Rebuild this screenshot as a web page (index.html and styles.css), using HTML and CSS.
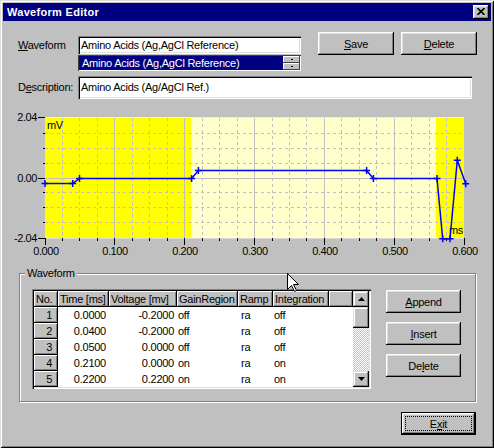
FILE: index.html
```html
<!DOCTYPE html>
<html>
<head>
<meta charset="utf-8">
<link rel="stylesheet" href="styles.css">
</head>
<body>
<div class="window">
  <div class="titlebar">
    <span class="title">Waveform Editor</span>
    <span class="close"><svg width="8" height="7" viewBox="0 0 8 7"><path d="M0.5 0 L7.5 7 M7.5 0 L0.5 7" stroke="#000" stroke-width="1.6"/></svg></span>
  </div>

  <div class="row1">
    <div class="lbl"><u>W</u>aveform</div>
    <div class="stack">
      <div class="field">Amino Acids (Ag,AgCl Reference)</div>
      <div class="listrow">
        <div class="sel">Amino Acids (Ag,AgCl Reference)</div>
        <div class="spin"><span><i></i></span><span><i></i></span></div>
      </div>
    </div>
    <div class="btn save"><span><u>S</u>ave</span></div>
    <div class="btn del-top"><span><u>D</u>elete</span></div>
  </div>

  <div class="row2">
    <div class="lbl lbl-desc">D<u>e</u>scription:</div>
    <div class="field desc">Amino Acids (Ag/AgCl Ref.)</div>
  </div>

  <svg class="chart" width="488" height="160" viewBox="3 102 488 160">
    <rect x="45" y="118" width="146" height="120" fill="#ffff00"/>
    <rect x="191" y="118" width="245" height="120" fill="#ffffcc"/>
    <rect x="436" y="118" width="28" height="120" fill="#ffff00"/>
    <line x1="45" y1="117.5" x2="464" y2="117.5" stroke="#ececec"/>
    <line x1="45" y1="238.5" x2="464" y2="238.5" stroke="#d8d8d8"/>
    <g stroke="#c0c0c0" stroke-dasharray="3 3">
      <path d="M62.5 118V238 M79.5 118V238 M97.5 118V238 M132.5 118V238 M149.5 118V238 M167.5 118V238 M202.5 118V238 M219.5 118V238 M237.5 118V238 M272.5 118V238 M289.5 118V238 M306.5 118V238 M341.5 118V238 M359.5 118V238 M376.5 118V238 M411.5 118V238 M429.5 118V238 M446.5 118V238"/>
      <path d="M45 133.5H464 M45 148.5H464 M45 163.5H464 M45 192.5H464 M45 207.5H464 M45 222.5H464"/>
    </g>
    <g stroke="#c0c0c0">
      <path d="M114.5 118V238 M184.5 118V238 M254.5 118V238 M324.5 118V238 M394.5 118V238 M45 178.5H464"/>
    </g>
    <g stroke="#000">
      <path d="M38 117.5H45 M38 178.5H45 M38 238.5H45 M43 133.5H45 M43 148.5H45 M43 163.5H45 M43 192.5H45 M43 207.5H45 M43 222.5H45"/>
      <path d="M45.5 238V245 M114.5 238V245 M184.5 238V245 M254.5 238V245 M324.5 238V245 M394.5 238V245 M464.5 238V245"/>
      <path d="M62.5 238V241 M79.5 238V241 M97.5 238V241 M132.5 238V241 M149.5 238V241 M167.5 238V241 M202.5 238V241 M219.5 238V241 M237.5 238V241 M272.5 238V241 M289.5 238V241 M306.5 238V241 M341.5 238V241 M359.5 238V241 M376.5 238V241 M411.5 238V241 M429.5 238V241 M446.5 238V241"/>
    </g>
    <g class="axis">
      <text x="37" y="121" text-anchor="end">2.04</text>
      <text x="37" y="182" text-anchor="end">0.00</text>
      <text x="37" y="242" text-anchor="end">-2.04</text>
      <text x="46" y="254.5" text-anchor="middle">0.000</text>
      <text x="115" y="254.5" text-anchor="middle">0.100</text>
      <text x="185" y="254.5" text-anchor="middle">0.200</text>
      <text x="255" y="254.5" text-anchor="middle">0.300</text>
      <text x="325" y="254.5" text-anchor="middle">0.400</text>
      <text x="395" y="254.5" text-anchor="middle">0.500</text>
      <text x="465" y="254.5" text-anchor="middle">0.600</text>
      <text x="47" y="128.5">mV</text>
      <text x="449" y="234">ms</text>
    </g>
    <g stroke="#0000ff" stroke-width="1.5" fill="none">
      <path d="M45 183.5 L72.7 183.5 L79.5 178.5 L191.6 178.5 L198.4 170.5 L366.6 170.5 L373.4 178.5 L437 178.5 L442.7 238.8 L450 238.8 L457.3 160.3 L465.7 183.7"/>
      <path d="M41.5 183.5H48.5 M45 180V187 M69.2 183.5H76.2 M72.7 180V187 M76 178.5H83 M79.5 175V182 M188.1 178.5H195.1 M191.6 175V182 M194.9 170.5H201.9 M198.4 167V174 M363.1 170.5H370.1 M366.6 167V174 M369.9 178.5H376.9 M373.4 175V182 M433.5 178.5H440.5 M437 175V182 M439.2 238.8H446.2 M442.7 235.3V242.3 M446.5 238.8H453.5 M450 235.3V242.3 M453.8 160.3H460.8 M457.3 156.8V163.8 M462.2 183.7H469.2 M465.7 180.2V187.2"/>
    </g>
  </svg>

  <fieldset class="group">
    <legend>Waveform</legend>
    <div class="gbody">
      <div class="grid">
        <div class="cells">
          <table>
            <colgroup>
              <col style="width:24px"><col style="width:51px"><col style="width:68px"><col style="width:61px"><col style="width:35px"><col style="width:56px"><col style="width:24px">
            </colgroup>
            <tr><th>No.</th><th>Time [ms]</th><th>Voltage [mv]</th><th>GainRegion</th><th>Ramp</th><th>Integration</th><th></th></tr>
            <tr><td class="rh">1</td><td class="num">0.0000</td><td class="num v">-0.2000</td><td class="txt">off</td><td class="txt r">ra</td><td class="txt">off</td><td></td></tr>
            <tr><td class="rh">2</td><td class="num">0.0400</td><td class="num v">-0.2000</td><td class="txt">off</td><td class="txt r">ra</td><td class="txt">off</td><td></td></tr>
            <tr><td class="rh">3</td><td class="num">0.0500</td><td class="num v">0.0000</td><td class="txt">off</td><td class="txt r">ra</td><td class="txt">off</td><td></td></tr>
            <tr><td class="rh">4</td><td class="num">0.2100</td><td class="num v">0.0000</td><td class="txt">on</td><td class="txt r">ra</td><td class="txt">on</td><td></td></tr>
            <tr><td class="rh">5</td><td class="num">0.2200</td><td class="num v">0.2200</td><td class="txt">on</td><td class="txt r">ra</td><td class="txt">on</td><td></td></tr>
          </table>
        </div>
        <div class="sb">
          <div class="sbtn"><svg width="7" height="4" viewBox="0 0 7 4"><path d="M3.5 0 L7 4 L0 4 Z" fill="#000"/></svg></div>
          <div class="thumb"></div>
          <div class="track"></div>
          <div class="sbtn"><svg width="7" height="4" viewBox="0 0 7 4"><path d="M0 0 L7 0 L3.5 4 Z" fill="#000"/></svg></div>
        </div>
      </div>
      <div class="side">
        <div class="btn"><span><u>A</u>ppend</span></div>
        <div class="btn"><span><u>I</u>nsert</span></div>
        <div class="btn"><span>De<u>l</u>ete</span></div>
      </div>
    </div>
  </fieldset>

  <div class="footer">
    <div class="btn exit"><div class="focus">E<u>x</u>it</div></div>
  </div>

  <svg class="cursor" width="13" height="20" viewBox="0 0 13 20"><path d="M0.5 0.5 V16.5 L4.5 12.5 L7.5 18.5 L9.5 17.5 L6.5 11.5 H11.5 Z" fill="#fff" stroke="#000" stroke-width="1"/></svg>
</div>
</body>
</html>
```
FILE: styles.css
```css
* { box-sizing: border-box; }
body {
  margin: 0;
  background: #c0c0c0;
  font-family: "Liberation Sans", Arial, sans-serif;
  font-size: 11px;
  letter-spacing: -0.25px;
  color: #000;
}
u { text-decoration: underline; text-underline-offset: 1px; }

.window {
  position: relative;
  width: 494px;
  height: 448px;
  padding: 3px;
  background: #c0c0c0;
  box-shadow: inset 1px 1px #dfdfdf, inset -1px -1px #000, inset 2px 2px #fff, inset -2px -2px #808080;
}

.titlebar {
  height: 18px;
  background: #000080;
  display: flex;
  align-items: center;
  justify-content: space-between;
  padding: 0 2px 0 4px;
}
.title {
  color: #fff;
  font-weight: bold;
  letter-spacing: 0.3px;
}
.close {
  width: 16px;
  height: 14px;
  background: #c0c0c0;
  box-shadow: inset -1px -1px #000, inset 1px 1px #fff, inset -2px -2px #808080, inset 2px 2px #dfdfdf;
  display: flex;
  align-items: center;
  justify-content: center;
  padding-bottom: 1px;
}
.close svg { display: block; }

.btn {
  width: 76px;
  height: 23px;
  background: #c0c0c0;
  box-shadow: inset -1px -1px #000, inset 1px 1px #fff, inset -2px -2px #808080, inset 2px 2px #dfdfdf;
  display: flex;
  align-items: center;
  justify-content: center;
}

.row1 {
  display: flex;
  align-items: flex-start;
  margin: 11px 0 0 15px;
}
.lbl {
  width: 60px;
  height: 18px;
  line-height: 18px;
  margin-top: 4px;
  white-space: nowrap;
}
.stack {
  width: 223px;
  margin-top: 4px;
}
.field {
  height: 18px;
  line-height: 18px;
  background: #fff;
  padding-left: 3px;
  white-space: nowrap;
  overflow: hidden;
  box-shadow: inset 1px 1px #808080, inset 2px 2px #000, inset -1px -1px #fff, inset -2px -2px #dfdfdf;
}
.listrow {
  margin-top: 1px;
  height: 16px;
  display: flex;
  padding: 1px;
  box-shadow: inset 1px 1px #404040, inset -1px -1px #fff;
}
.sel {
  flex: 1;
  background: #000080;
  color: #fff;
  line-height: 14px;
  padding-left: 3px;
  white-space: nowrap;
  overflow: hidden;
}
.spin {
  width: 17px;
  display: flex;
  flex-direction: column;
}
.spin span {
  flex: 1;
  background: #c0c0c0;
  box-shadow: inset -1px -1px #404040, inset 1px 1px #fff;
  display: flex;
  align-items: center;
  justify-content: center;
}
.spin i {
  width: 2px;
  height: 1px;
  background: #000;
}
.save { margin-left: 17px; }
.del-top { margin-left: 7px; }

.row2 {
  display: flex;
  margin: 5px 0 0 15px;
}
.lbl-desc {
  height: 23px;
  line-height: 23px;
  margin-top: 0;
}
.field.desc {
  width: 394px;
  height: 23px;
  line-height: 23px;
}

.chart {
  display: block;
  margin-top: 3px;
}
.axis {
  font-family: "Liberation Sans", Arial, sans-serif;
  font-size: 11px;
  letter-spacing: -0.4px;
  fill: #000;
}

.group {
  margin: 5px 0 0 16px;
  width: 457px;
  padding: 9px 14px 12px 12px;
  border: 1px solid #808080;
  box-shadow: inset 1px 1px #fff, 1px 1px #fff;
  min-inline-size: 0;
}
.group legend {
  padding: 0 2px;
  margin-left: -7px;
  line-height: 13px;
  background: #c0c0c0;
}
.gbody {
  display: flex;
  gap: 15px;
}
.grid {
  width: 339px;
  height: 100px;
  padding: 2px;
  display: flex;
  background: #fff;
  box-shadow: inset 1px 1px #808080, inset 2px 2px #000, inset -1px -1px #fff, inset -2px -2px #dfdfdf;
}
.cells {
  width: 319px;
  height: 96px;
  overflow: hidden;
}
table {
  table-layout: fixed;
  width: 319px;
  border-collapse: collapse;
  border-spacing: 0;
}
th, td {
  height: 16px;
  padding: 0;
  white-space: nowrap;
  overflow: hidden;
  font-weight: normal;
  line-height: 16px;
}
th {
  text-align: left;
  padding-left: 2px;
  background: #c0c0c0;
  box-shadow: inset -1px -1px #000, inset 1px 1px #fff, inset -2px -2px #808080;
}
td { background: #fff; }
td.rh {
  background: #c0c0c0;
  text-align: right;
  padding-right: 6px;
  box-shadow: inset -1px -1px #000, inset 1px 1px #fff, inset -2px -2px #808080;
}
td.num { text-align: right; padding-right: 3px; }
td.num.v { padding-right: 3px; }
td.txt { padding-left: 1px; }
td.r { padding-left: 3px; }

.sb {
  width: 16px;
  display: flex;
  flex-direction: column;
}
.sbtn, .thumb {
  background: #c0c0c0;
  box-shadow: inset -1px -1px #000, inset 1px 1px #dfdfdf, inset -2px -2px #808080, inset 2px 2px #fff;
}
.sbtn {
  height: 16px;
  display: flex;
  align-items: center;
  justify-content: center;
}
.sbtn svg { display: block; }
.thumb { height: 21px; }
.track {
  flex: 1;
  background: repeating-conic-gradient(#fff 0 25%, #c0c0c0 0 50%) 0 0 / 2px 2px;
}

.side {
  display: flex;
  flex-direction: column;
  gap: 9px;
  padding-top: 1px;
}
.side .btn { width: 75px; }

.footer {
  display: flex;
  justify-content: flex-end;
  margin: 10px 15px 0 0;
}
.btn.exit {
  width: 75px;
  border: 1px solid #000;
  padding: 3px;
  align-items: stretch;
}
.focus {
  flex: 1;
  border: 1px dotted #000;
  display: flex;
  align-items: center;
  justify-content: center;
}

.cursor {
  position: absolute;
  left: 287px;
  top: 273px;
}
```
